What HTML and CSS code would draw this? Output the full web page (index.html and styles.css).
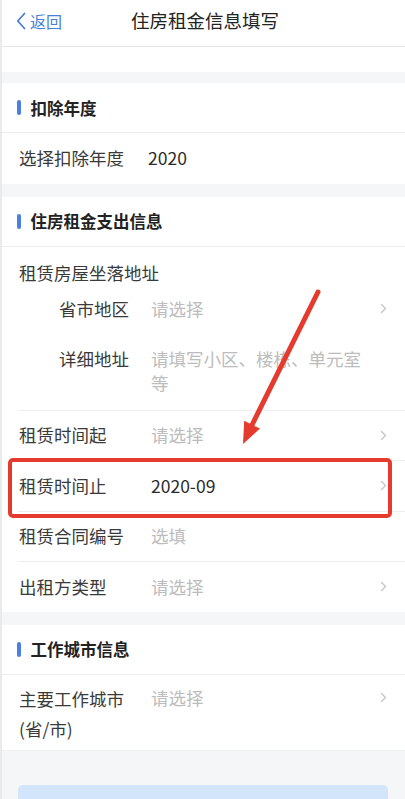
FILE: index.html
```html
<!DOCTYPE html>
<html lang="zh-CN">
<head>
<meta charset="utf-8">
<title>住房租金信息填写</title>
<link rel="stylesheet" href="styles.css">
</head>
<body>
<div class="page">
  <header class="nav">
    <a class="back">
      <svg class="back-icon" width="10" height="18" viewBox="0 0 10 18"><polyline points="8.5,1.5 1.8,9 8.5,16.5" fill="none" stroke="#4a7fd4" stroke-width="1.8" stroke-linecap="round" stroke-linejoin="round"/></svg>
      <span>返回</span>
    </a>
    <h1 class="title">住房租金信息填写</h1>
  </header>
  <div class="blank"></div>
  <div class="gap gap-top"></div>

  <section class="card">
    <div class="sec-head"><i class="bar"></i><span>扣除年度</span></div>
    <div class="list">
      <div class="row">
        <span class="label">选择扣除年度</span>
        <span class="value year">2020</span>
        <span></span>
      </div>
    </div>
  </section>
  <div class="gap"></div>

  <section class="card">
    <div class="sec-head"><i class="bar"></i><span>住房租金支出信息</span></div>
    <div class="list">
      <div class="group">
        <div class="group-title">租赁房屋坐落地址</div>
        <div class="row sub">
          <span class="label">省市地区</span>
          <span class="value ph">请选择</span>
          <svg class="chev" width="7" height="11" viewBox="0 0 7 11"><polyline points="1.5,1.5 5.5,5.5 1.5,9.5" fill="none" stroke="#c6c6c6" stroke-width="1.4" stroke-linecap="round" stroke-linejoin="round"/></svg>
        </div>
        <div class="row sub sub-last">
          <span class="label">详细地址</span>
          <span class="value ph">请填写小区、楼栋、单元室等</span>
          <span></span>
        </div>
      </div>
      <div class="row">
        <span class="label">租赁时间起</span>
        <span class="value ph">请选择</span>
        <svg class="chev" width="7" height="11" viewBox="0 0 7 11"><polyline points="1.5,1.5 5.5,5.5 1.5,9.5" fill="none" stroke="#c6c6c6" stroke-width="1.4" stroke-linecap="round" stroke-linejoin="round"/></svg>
      </div>
      <div class="row">
        <span class="label">租赁时间止</span>
        <span class="value">2020-09</span>
        <svg class="chev" width="7" height="11" viewBox="0 0 7 11"><polyline points="1.5,1.5 5.5,5.5 1.5,9.5" fill="none" stroke="#c6c6c6" stroke-width="1.4" stroke-linecap="round" stroke-linejoin="round"/></svg>
      </div>
      <div class="row">
        <span class="label">租赁合同编号</span>
        <span class="value ph">选填</span>
        <span></span>
      </div>
      <div class="row">
        <span class="label">出租方类型</span>
        <span class="value ph">请选择</span>
        <svg class="chev" width="7" height="11" viewBox="0 0 7 11"><polyline points="1.5,1.5 5.5,5.5 1.5,9.5" fill="none" stroke="#c6c6c6" stroke-width="1.4" stroke-linecap="round" stroke-linejoin="round"/></svg>
      </div>
    </div>
  </section>
  <div class="gap"></div>

  <section class="card">
    <div class="sec-head"><i class="bar"></i><span>工作城市信息</span></div>
    <div class="list">
      <div class="row tall">
        <span class="label two">主要工作城市(省/市)</span>
        <span class="value ph">请选择</span>
        <svg class="chev" width="7" height="11" viewBox="0 0 7 11"><polyline points="1.5,1.5 5.5,5.5 1.5,9.5" fill="none" stroke="#c6c6c6" stroke-width="1.4" stroke-linecap="round" stroke-linejoin="round"/></svg>
      </div>
    </div>
  </section>

  <div class="footer">
    <div class="btn"></div>
  </div>

  <svg class="annot" width="405" height="799" viewBox="0 0 405 799">
    <rect x="10" y="460" width="380" height="56" rx="3" ry="3" fill="none" stroke="#e53b2e" stroke-width="4"/>
    <line x1="318" y1="292" x2="252" y2="425" stroke="#e53b2e" stroke-width="5" stroke-linecap="round"/>
    <polygon points="243,444 244.2,420.8 260,428.6" fill="#e53b2e"/>
  </svg>
</div>
</body>
</html>
```

FILE: styles.css
```css
* { box-sizing: border-box; }
html, body { margin: 0; padding: 0; }
body {
  background: #f5f6f8;
  font-family: "Noto Sans CJK SC", "Noto Sans", "Liberation Sans", sans-serif;
  color: #333;
}
.page {
  position: relative;
  width: 405px;
  height: 799px;
  overflow: hidden;
  background: #f5f6f8;
  border-left: 2px solid #e9eaec;
}
.nav {
  position: relative;
  height: 47px;
  background: #fff;
  border-bottom: 1px solid #e6e6e6;
  display: flex;
  align-items: center;
  justify-content: center;
}
.back {
  position: absolute;
  left: 14px;
  top: 10px;
  display: flex;
  align-items: center;
  gap: 4px;
  color: #4a7fd4;
  font-size: 16px;
  line-height: 22px;
}
.back-icon { display: block; }
.title {
  margin: 0;
  font-size: 18.5px;
  font-weight: 400;
  color: #222;
  line-height: 26px;
  margin-top: -6px;
  margin-left: 3px;
}
.blank { height: 25px; background: #fff; }
.gap { height: 13px; background: #f5f6f8; }
.gap-top { height: 11px; }
.card { background: #fff; }
.sec-head {
  height: 50px;
  border-bottom: 1px solid #eeeeee;
  display: flex;
  align-items: center;
  padding-left: 15px;
  font-size: 16.5px;
  font-weight: 700;
  color: #222;
}
.bar {
  display: block;
  width: 3.5px;
  height: 15px;
  border-radius: 2px;
  background: #4a80e3;
  margin-right: 10px;
}
.list { padding-left: 16px; }
.row {
  display: grid;
  grid-template-columns: 133px 1fr 22px;
  align-items: center;
  height: 50.5px;
  font-size: 17.5px;
  line-height: 24px;
  padding-right: 16px;
}
.list > .row + .row, .list > .group + .row { border-top: 1px solid #eeeeee; }
.label { padding-left: 1px; color: #3a3a3a; max-width: 118px; }
.value { color: #2a2a2a; }
.value.year { margin-left: -3px; }
.ph { color: #bcbcbc; }
.chev { justify-self: end; margin-right: 2px; }
.group { padding-top: 14px; padding-bottom: 15px; }
.group-title {
  font-size: 17.5px;
  line-height: 24px;
  padding-left: 1px;
  color: #3a3a3a;
  margin-bottom: -1px;
}
.row.sub { height: 50px; }
.row.sub .label { padding-left: 41px; max-width: none; }
.row.sub-last { height: auto; align-items: start; padding-top: 13px; }
.row.sub-last .value { padding-right: 4px; }
.row.tall { height: 75px; align-items: start; padding-top: 9px; }
.row.tall .value, .row.tall .chev { margin-top: 2px; }
.row.tall .chev { margin-top: 8px; }
.label.two { line-height: 30px; }
.footer {
  height: 60px;
  padding: 34px 17px 0 16px;
  background: #f5f6f8;
  border-top: 1px solid #f0f1f3;
}
.btn {
  height: 40px;
  background: #d3e5fb;
  border-radius: 5px;
}
.annot {
  position: absolute;
  left: -2px;
  top: 0;
  pointer-events: none;
}
```
